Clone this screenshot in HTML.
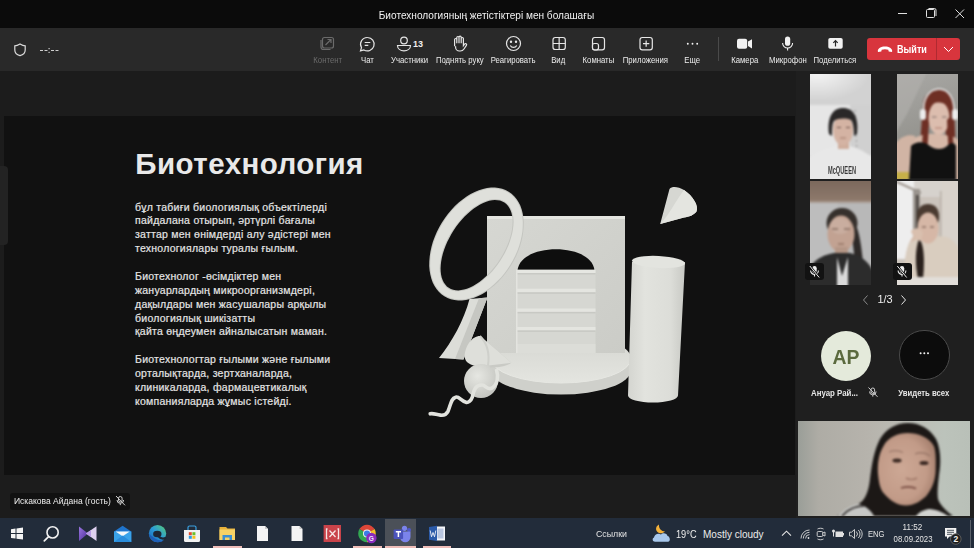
<!DOCTYPE html>
<html><head><meta charset="utf-8">
<style>
*{margin:0;padding:0;box-sizing:border-box}
html,body{width:974px;height:548px;overflow:hidden;background:#1f1f1f;font-family:"Liberation Sans",sans-serif;color:#fff}
.a{position:absolute}
#title{left:0;top:0;width:974px;height:28px;background:#0b0b0b}
#tb{left:0;top:28px;width:974px;height:43px;background:#292929}
#content{left:0;top:71px;width:796px;height:447px;background:#1c1c1c}
#slide{left:4px;top:116px;width:791px;height:359px;background:#111111}
#panel{left:797px;top:71px;width:177px;height:447px;background:#1f1f1f}
#taskbar{left:0;top:518px;width:974px;height:30px;background:#222c3a}
.lbl{font-size:9px;line-height:10px;color:#ececec;white-space:nowrap;text-align:center;width:80px;top:54.5px}
.lbl span{display:inline-block;transform:scaleX(0.86)}
svg{position:absolute;overflow:visible}
</style></head><body>
<div id="title" class="a"></div>
<div class="a" style="left:286.7px;top:7.5px;width:400px;text-align:center;font-size:11px;line-height:14px;color:#f2f2f2"><span style="display:inline-block;transform:scaleX(0.917)">Биотехнологияның жетістіктері мен болашағы</span></div>
<!-- window controls -->
<svg style="left:0;top:0" width="974" height="28">
 <line x1="898" y1="13.5" x2="907" y2="13.5" stroke="#e0e0e0" stroke-width="1"/>
 <rect x="926.5" y="9.5" width="8" height="8" rx="1" fill="none" stroke="#e0e0e0" stroke-width="1"/>
 <path d="M928.5 8.5 h6 a1.5 1.5 0 0 1 1.5 1.5 v6" fill="none" stroke="#e0e0e0" stroke-width="1"/>
 <path d="M955.5 9.5 L964 18 M964 9.5 L955.5 18" stroke="#e0e0e0" stroke-width="1"/>
</svg>
<div id="tb" class="a"></div>
<!-- shield + timer -->
<svg style="left:0;top:0" width="974" height="71">
 <path d="M20 44 C17.5 45.5 16 45.8 14.8 45.8 V50 C14.8 53 17 54.8 20 55.6 C23 54.8 25.2 53 25.2 50 V45.8 C24 45.8 22.5 45.5 20 44 Z" fill="none" stroke="#dcdcdc" stroke-width="1.2"/>
 <path d="M40 50.5 h3 M44.5 50.5 h3 M51 50.5 h3 M55.5 50.5 h3" stroke="#cfcfcf" stroke-width="1"/>
 <rect x="48.5" y="48" width="1.2" height="1.2" fill="#cfcfcf"/><rect x="48.5" y="51.8" width="1.2" height="1.2" fill="#cfcfcf"/>
</svg>
<!-- toolbar icons -->
<svg style="left:0;top:0" width="974" height="71" fill="none" stroke="#e6e6e6" stroke-width="1.2">
 <!-- content (disabled) -->
 <g stroke="#6b6b6b">
  <rect x="322.5" y="37.5" width="11" height="10.5" rx="2"/>
  <path d="M321 40 v7 a2.5 2.5 0 0 0 2.5 2.5 h7"/>
  <path d="M325.5 45 L331 39.5 M327.5 39.5 h3.5 v3.5"/>
 </g>
 <!-- chat -->
 <path d="M367.5 37.5 a6.7 6.7 0 1 1 -3.6 12.4 l-3.4 1 l1 -3.3 a6.7 6.7 0 0 1 6 -10.1 z"/>
 <path d="M364.7 42.5 h5.6 M364.7 45.3 h3.6"/>
 <!-- participants -->
 <circle cx="404" cy="40.5" r="3.3"/>
 <path d="M397.5 45.5 h13 c0 3.2 -2.9 5.3 -6.5 5.3 s-6.5 -2.1 -6.5 -5.3 z"/>
 <!-- raise hand -->
 <path d="M454.6 46.2 V39.6 a1.1 1.1 0 0 1 2.2 0 V43.2 M456.8 40 V37.6 a1.1 1.1 0 0 1 2.2 0 V43.2 M459 39 V37.2 a1.1 1.1 0 0 1 2.2 0 V43.2 M461.2 40 V38.6 a1.1 1.1 0 0 1 2.2 0 V45.6 l1.1 -1.5 a1.15 1.15 0 0 1 1.9 1.3 l-2.4 3.6 a4.4 4.4 0 0 1 -3.7 2 h-0.9 a3.8 3.8 0 0 1 -3.8 -3.8 V46.2"/>
 <!-- react -->
 <circle cx="513.5" cy="43.5" r="7"/>
 <circle cx="511" cy="41.8" r="0.6" fill="#e6e6e6"/><circle cx="516" cy="41.8" r="0.6" fill="#e6e6e6"/>
 <path d="M510.3 45.5 a3.6 3.6 0 0 0 6.4 0"/>
 <!-- view -->
 <rect x="553" y="37.5" width="12.3" height="12" rx="2.3"/>
 <path d="M559.15 37.5 v12 M553 43.5 h12.3"/>
 <!-- rooms -->
 <rect x="592.5" y="37.5" width="12" height="12.3" rx="2.3"/>
 <rect x="592.5" y="43.5" width="6" height="6.3" rx="2" fill="#292929"/>
 <!-- apps -->
 <rect x="640" y="37.5" width="12.3" height="12.3" rx="2.3"/>
 <path d="M646.15 40.5 v6.3 M643 43.65 h6.3"/>
 <!-- separator -->
 <line x1="718.5" y1="37" x2="718.5" y2="61" stroke="#4a4a4a" stroke-width="1"/>
</svg>
<svg style="left:0;top:0" width="974" height="71" fill="#f2f2f2">
 <circle cx="687.8" cy="43.8" r="0.95"/><circle cx="692.5" cy="43.8" r="0.95"/><circle cx="697.2" cy="43.8" r="0.95"/>
 <!-- camera -->
 <rect x="737" y="38.8" width="10.2" height="10" rx="2"/>
 <path d="M748 41.5 L752 39.2 V48.4 L748 46.1 Z"/>
 <!-- mic -->
 <rect x="785" y="36.6" width="5.2" height="9.2" rx="2.6"/>
 <path d="M782.6 43 a5 5 0 0 0 10 0" fill="none" stroke="#f2f2f2" stroke-width="1.1"/>
 <line x1="787.6" y1="48" x2="787.6" y2="50.5" stroke="#f2f2f2" stroke-width="1.1"/>
 <!-- share -->
 <rect x="828.3" y="38" width="14.4" height="10.8" rx="1.8"/>
 <path d="M835.5 46.5 V40.8 M833.3 42.8 L835.5 40.5 L837.7 42.8" stroke="#292929" stroke-width="1.2" fill="none"/>
</svg>
<div class="a" style="left:413px;top:38px;font-size:9px;font-weight:700;color:#f0f0f0;line-height:12px">13</div>
<div class="a lbl" style="left:287.5px;color:#6b6b6b"><span>Контент</span></div>
<div class="a lbl" style="left:327px"><span>Чат</span></div>
<div class="a lbl" style="left:369.5px"><span>Участники</span></div>
<div class="a lbl" style="left:419.5px"><span>Поднять руку</span></div>
<div class="a lbl" style="left:473.3px"><span>Реагировать</span></div>
<div class="a lbl" style="left:518.5px"><span>Вид</span></div>
<div class="a lbl" style="left:558.8px"><span>Комнаты</span></div>
<div class="a lbl" style="left:605.8px"><span>Приложения</span></div>
<div class="a lbl" style="left:652.5px"><span>Еще</span></div>
<div class="a lbl" style="left:704.5px"><span>Камера</span></div>
<div class="a lbl" style="left:747.6px"><span>Микрофон</span></div>
<div class="a lbl" style="left:795.3px"><span>Поделиться</span></div>
<!-- leave button -->
<div class="a" style="left:867px;top:38px;width:93px;height:22px;background:#d8353d;border-radius:3px"></div>
<div class="a" style="left:936px;top:38px;width:1px;height:22px;background:#b02a31"></div>
<svg style="left:0;top:0" width="974" height="71">
 <path d="M877.8 51.2 c0 -2.8 3.2 -4.6 7.2 -4.6 s7.2 1.8 7.2 4.6 l-0.3 0.9 l-3.2 -0.6 l-0.4 -1.8 c-2.2 -0.7 -4.4 -0.7 -6.6 0 l-0.4 1.8 l-3.2 0.6 z" fill="#fff"/>
 <path d="M944 47 L948.5 51.5 L953 47" fill="none" stroke="#fff" stroke-width="1"/>
</svg>
<div class="a" style="left:897px;top:43px;font-size:11px;font-weight:700;line-height:12px;color:#fff"><span style="display:inline-block;transform:scaleX(0.825);transform-origin:left">Выйти</span></div>

<div id="content" class="a"></div>
<div id="slide" class="a"></div>
<div class="a" style="left:0;top:166px;width:8px;height:79px;background:#232323;border-radius:0 4px 4px 0"></div>

<div class="a" style="left:135.3px;top:146.5px;font-size:29.5px;font-weight:700;letter-spacing:0.45px;line-height:34px;color:#e9e9e9;white-space:nowrap">Биотехнология</div>
<div class="a" id="body" style="left:135px;top:200.5px;font-size:10.5px;letter-spacing:0.25px;line-height:13.88px;color:#e4e4e4;white-space:nowrap;-webkit-text-stroke:0.2px #e4e4e4">
бұл табиғи биологиялық объектілерді<br>пайдалана отырып, әртүрлі бағалы<br>заттар мен өнімдерді алу әдістері мен<br>технологиялары туралы ғылым.<br><br>Биотехнолог -өсімдіктер мен<br>жануарлардың микроорганизмдері,<br>дақылдары мен жасушалары арқылы<br>биологиялық шикізатты<br>қайта өңдеумен айналысатын маман.<br><br>Биотехнологтар ғылыми және ғылыми<br>орталықтарда, зертханаларда,<br>клиникаларда, фармацевтикалық<br>компанияларда жұмыс істейді.</div>
<svg style="left:0;top:0" width="974" height="548">
 <defs>
  <linearGradient id="cyl" x1="0" x2="1" y1="0" y2="0">
   <stop offset="0" stop-color="#d4d5d0"/><stop offset="0.3" stop-color="#e2e3de"/><stop offset="0.75" stop-color="#dcddd8"/><stop offset="1" stop-color="#c8c9c4"/>
  </linearGradient>
  <linearGradient id="wall" x1="0" x2="1" y1="0" y2="1">
   <stop offset="0" stop-color="#d6d7d2"/><stop offset="1" stop-color="#cbccc7"/>
  </linearGradient>
  <linearGradient id="disc" x1="0" x2="0" y1="0" y2="1">
   <stop offset="0" stop-color="#d4d5d0"/><stop offset="1" stop-color="#e4e5e0"/>
  </linearGradient>
  <radialGradient id="sph" cx="0.4" cy="0.35" r="0.7">
   <stop offset="0" stop-color="#e6e7e2"/><stop offset="1" stop-color="#c2c3be"/>
  </radialGradient>
 </defs>
 <!-- disc -->
 <path d="M491 358.5 v11.5 a70 24.5 0 0 0 140 0 v-11.5 z" fill="#cfd0cb"/>
 <ellipse cx="561" cy="358.5" rx="70" ry="24.5" fill="url(#disc)"/>
 <path d="M491 358.5 a70 24.5 0 0 0 140 0" fill="none" stroke="#e6e7e2" stroke-width="1"/>
 <!-- wall -->
 <path d="M487 218 L625 218 L625 353 L487 353 Z" fill="url(#wall)"/>
 <rect x="487" y="216" width="138" height="3" fill="#e4e5e0"/>
 <!-- arch inner dark -->
 <path d="M517.5 270.5 C519 256 538 249.3 556 249.3 C574 249.3 593 256 594.5 270.5 Z" fill="#0e0e0e"/>
 <!-- stairs -->
 <rect x="516" y="270" width="79.5" height="83" fill="#d6d7d2"/>
 <rect x="516" y="269.6" width="79.5" height="3.4" fill="#e6e7e2"/>
 <rect x="516" y="288.7" width="79.5" height="3.6" fill="#e4e5e0"/>
 <rect x="516" y="308.5" width="79.5" height="3.4" fill="#e4e5e0"/>
 <rect x="516" y="327" width="79.5" height="3.4" fill="#e4e5e0"/>
 <rect x="516" y="273" width="79.5" height="1.5" fill="#c8c9c4"/>
 <rect x="516" y="292.3" width="79.5" height="1.5" fill="#c8c9c4"/>
 <rect x="516" y="311.9" width="79.5" height="1.5" fill="#c8c9c4"/>
 <rect x="516" y="330.4" width="79.5" height="1.5" fill="#c8c9c4"/>
 <rect x="516" y="344" width="79.5" height="9" fill="#dcddd8"/>
 <rect x="516" y="270" width="1.5" height="83" fill="#e3e4df"/>
 <!-- cylinder -->
 <path d="M632 262 L628 395.5 A25 7 0 0 0 678 395.5 L685 262 Z" fill="url(#cyl)"/>
 <ellipse cx="658.5" cy="262" rx="26.5" ry="6" transform="rotate(3 658.5 262)" fill="#e3e4df"/>
 <!-- cone top right -->
 <path d="M660.2 224 L669.5 189 C672 186 678 186.5 684 190 C693 196 699 206 696.5 211.5 C694 215 689 217 684 217.5 Z" fill="#d6d7d2"/>
 <path d="M684 190 C693 196 699 206 696.5 211.5 C694 215 689 217 684 217.5 L660.2 224 C670 214 676 200 684 190 Z" fill="#e4e5e0"/>
 <!-- ring -->
 <path d="M508.7 191.7 L511.6 193.8 L514.2 196.2 L516.5 199.0 L518.6 202.2 L520.3 205.6 L521.7 209.4 L522.7 213.4 L523.4 217.6 L523.8 222.1 L523.7 226.7 L523.3 231.5 L522.6 236.3 L521.5 241.2 L520.1 246.2 L518.3 251.1 L516.2 255.9 L513.8 260.7 L511.2 265.3 L508.2 269.8 L505.1 274.1 L501.7 278.1 L498.1 281.9 L494.3 285.4 L490.4 288.6 L486.4 291.5 L482.4 294.0 L478.3 296.1 L474.1 297.8 L470.0 299.1 L466.0 300.0 L462.0 300.4 L458.1 300.4 L454.4 300.0 L450.8 299.2 L447.5 298.0 L444.3 296.3 L441.4 294.2 L438.8 291.8 L436.5 289.0 L434.4 285.8 L432.7 282.4 L431.3 278.6 L430.3 274.6 L429.6 270.4 L429.2 265.9 L429.3 261.3 L429.7 256.5 L430.4 251.7 L431.5 246.8 L432.9 241.8 L434.7 236.9 L436.8 232.1 L439.2 227.3 L441.8 222.7 L444.8 218.2 L447.9 213.9 L451.3 209.9 L454.9 206.1 L458.7 202.6 L462.6 199.4 L466.6 196.5 L470.6 194.0 L474.7 191.9 L478.9 190.2 L483.0 188.9 L487.0 188.0 L491.0 187.6 L494.9 187.6 L498.6 188.0 L502.2 188.8 L505.5 190.0 Z M504.4 202.6 L506.3 204.0 L507.9 205.8 L509.4 207.9 L510.5 210.2 L511.5 212.9 L512.1 215.7 L512.5 218.8 L512.6 222.1 L512.4 225.6 L512.0 229.2 L511.3 233.0 L510.3 236.8 L509.1 240.7 L507.6 244.6 L505.9 248.6 L503.9 252.5 L501.8 256.3 L499.5 260.1 L497.0 263.8 L494.3 267.3 L491.5 270.6 L488.6 273.8 L485.6 276.7 L482.5 279.4 L479.4 281.9 L476.3 284.0 L473.1 285.9 L470.0 287.4 L466.9 288.7 L464.0 289.6 L461.1 290.1 L458.3 290.4 L455.7 290.2 L453.2 289.8 L450.9 289.0 L448.8 287.8 L446.9 286.4 L445.3 284.6 L443.8 282.5 L442.7 280.2 L441.7 277.5 L441.1 274.7 L440.7 271.6 L440.6 268.3 L440.8 264.8 L441.2 261.2 L441.9 257.4 L442.9 253.6 L444.1 249.7 L445.6 245.8 L447.3 241.8 L449.3 237.9 L451.4 234.1 L453.7 230.3 L456.2 226.6 L458.9 223.1 L461.7 219.8 L464.6 216.6 L467.6 213.7 L470.7 211.0 L473.8 208.5 L476.9 206.4 L480.1 204.5 L483.2 203.0 L486.3 201.7 L489.2 200.8 L492.1 200.3 L494.9 200.0 L497.5 200.2 L500.0 200.6 L502.3 201.4 Z" fill="#c4c5c0" fill-rule="evenodd"/>
 <path d="M508.1 192.6 L511.0 194.6 L513.5 196.9 L515.8 199.7 L517.8 202.8 L519.5 206.2 L520.8 209.8 L521.8 213.8 L522.5 218.0 L522.8 222.3 L522.7 226.9 L522.4 231.5 L521.6 236.3 L520.5 241.1 L519.1 246.0 L517.4 250.8 L515.3 255.6 L512.9 260.2 L510.3 264.8 L507.4 269.2 L504.3 273.4 L501.0 277.4 L497.4 281.1 L493.8 284.6 L490.0 287.7 L486.0 290.5 L482.1 293.0 L478.0 295.1 L474.0 296.8 L470.0 298.1 L466.0 299.0 L462.1 299.4 L458.3 299.5 L454.7 299.1 L451.2 298.3 L447.9 297.1 L444.9 295.4 L442.0 293.4 L439.5 291.1 L437.2 288.3 L435.2 285.2 L433.5 281.8 L432.2 278.2 L431.2 274.2 L430.5 270.0 L430.2 265.7 L430.3 261.1 L430.6 256.5 L431.4 251.7 L432.5 246.9 L433.9 242.0 L435.6 237.2 L437.7 232.4 L440.1 227.8 L442.7 223.2 L445.6 218.8 L448.7 214.6 L452.0 210.6 L455.6 206.9 L459.2 203.4 L463.0 200.3 L467.0 197.5 L470.9 195.0 L475.0 192.9 L479.0 191.2 L483.0 189.9 L487.0 189.0 L490.9 188.6 L494.7 188.5 L498.3 188.9 L501.8 189.7 L505.1 190.9 Z M504.9 201.7 L506.9 203.2 L508.6 205.1 L510.1 207.2 L511.3 209.6 L512.3 212.3 L513.0 215.3 L513.4 218.4 L513.6 221.8 L513.4 225.4 L513.0 229.1 L512.3 232.9 L511.3 236.8 L510.1 240.8 L508.6 244.9 L506.8 248.9 L504.9 252.9 L502.7 256.8 L500.3 260.7 L497.7 264.4 L495.0 268.0 L492.2 271.4 L489.2 274.6 L486.1 277.6 L483.0 280.3 L479.8 282.8 L476.5 285.0 L473.3 286.9 L470.1 288.4 L467.0 289.7 L463.9 290.6 L460.9 291.1 L458.1 291.3 L455.4 291.2 L452.8 290.7 L450.4 289.9 L448.3 288.7 L446.3 287.2 L444.6 285.3 L443.1 283.2 L441.9 280.8 L440.9 278.1 L440.2 275.1 L439.8 272.0 L439.6 268.6 L439.8 265.0 L440.2 261.3 L440.9 257.5 L441.9 253.6 L443.1 249.6 L444.6 245.5 L446.4 241.5 L448.3 237.5 L450.5 233.6 L452.9 229.7 L455.5 226.0 L458.2 222.4 L461.0 219.0 L464.0 215.8 L467.1 212.8 L470.2 210.1 L473.4 207.6 L476.7 205.4 L479.9 203.5 L483.1 202.0 L486.2 200.7 L489.3 199.8 L492.3 199.3 L495.1 199.1 L497.8 199.2 L500.4 199.7 L502.8 200.5 Z" fill="#dfe0db" fill-rule="evenodd"/>
 <!-- slab -->
 <path d="M469.5 299 L487.5 297.5 L463.5 359.5 L439 358 C452 342 464 320 469.5 299 Z" fill="#dcddd8"/>
 <path d="M479 298.3 L487.5 297.5 L463.5 359.5 L455 359 Z" fill="#c6c7c2"/>
 <!-- small cone -->
 <path d="M480 336 L511.4 362.8 C506 367 492 369 480 366.5 Z" fill="#c9cac5"/>
 <path d="M480 336 C472 336 465 346 464.7 356 C464.5 362 470 366 480 366.5 L511.4 362.8 Z" fill="#dedfda"/>
 <path d="M480 336 C486 342 490 352 488 366" fill="none" stroke="#cfd0cb" stroke-width="2"/>
 <!-- sphere -->
 <circle cx="481" cy="381" r="17" fill="url(#sph)"/>
 <!-- squiggle -->
 <path d="M496.6 370.4 C498.5 376 498 385 491.5 388.3 C487 390 485 385 482.5 385 C476 384.5 474 389 472.3 397.2 C471 401 468 403 466 402.3 C461 401 459 396 455.7 397.2 C451 398.5 451 404 448 411.3 C446 415 443 415.5 440.4 415.1 C436 414.5 433 413 430.2 413.8" fill="none" stroke="#e2e3de" stroke-width="3.6" stroke-linecap="round"/>
</svg>


<div id="panel" class="a"></div>
<!-- video tiles -->
<div class="a" style="left:810px;top:74px;width:61px;height:105px;overflow:hidden;background:#dedede">
 <svg width="61" height="105" style="left:0;top:0;filter:blur(1px)">
  <defs><radialGradient id="t1g" cx="0.15" cy="0.05" r="0.8"><stop offset="0" stop-color="#f4f4f4"/><stop offset="1" stop-color="#d2d2d2"/></radialGradient></defs>
  <rect x="-2" y="-2" width="65" height="34" fill="url(#t1g)"/>
  <rect x="-2" y="31" width="44" height="50" fill="#e6e6e6"/>
  <rect x="40" y="31" width="23" height="50" fill="#d0d0d0"/>
  <path d="M45 36 L47 80" stroke="#9a9a9a" stroke-width="1" stroke-dasharray="2 3"/>
  <path d="M-2 84 C6 78 16 74 26 72 L40 72 C48 74 56 78 63 84 V107 H-2 Z" fill="#e8e8e8"/>
  <rect x="28" y="66" width="11" height="9" fill="#cfae9d"/>
  <ellipse cx="33" cy="56" rx="10" ry="15.5" fill="#d4b3a3"/>
  <path d="M19 60 C17 44 22 34 33 34 C44 34 49 44 47 60 L44 62 C44 54 43 48 41 46 C36 44 28 44 24 47 C22 50 22 56 22 62 Z" fill="#2a2828"/>
  <path d="M27 53.5 h4 M36 53.5 h4" stroke="#6a5048" stroke-width="1"/>
  <path d="M30 64 h6" stroke="#a07868" stroke-width="1"/>
 </svg>
 <svg width="61" height="105" style="left:0;top:0"><text x="32" y="100" font-size="10.5" font-weight="700" text-anchor="middle" fill="#1a1a1a" font-family="Liberation Sans" textLength="28" lengthAdjust="spacingAndGlyphs" opacity="0.85">McQUEEN</text></svg>
</div>
<div class="a" style="left:897px;top:74px;width:61px;height:105px;overflow:hidden;background:linear-gradient(160deg,#a9a8a5 0%,#95948f 55%,#858480 100%)">
 <svg width="61" height="105" style="left:0;top:0;filter:blur(1px)">
  <path d="M-2 0 L30 -2 L10 40 L-2 60 Z" fill="#b2b1ad" opacity="0.6"/>
  <path d="M26 30 C27 20 34 16 42 16 C51 16 57 22 57 32 L59 84 L50 84 L48 44 L32 44 L28 84 L22 84 Z" fill="#6e2f24"/>
  <path d="M-2 70 C4 62 12 60 18 62 L20 106 H-2 Z" fill="#d1b4a4"/>
  <path d="M52 62 C58 62 63 66 63 70 V106 H52 Z" fill="#cdb0a0"/>
  <path d="M18 64 C26 58 52 58 58 66 L58 84 L18 84 Z" fill="#d6b8a8"/>
  <ellipse cx="42" cy="44" rx="10.5" ry="16.5" fill="#dcbdae"/>
  <path d="M30 36 C32 26 50 26 54 36 L54 30 C50 22 34 22 30 30 Z" fill="#6e2f24"/>
  <path d="M27 44 L24 84 L30 84 L32 48 Z M54 42 L58 86 L52 86 L50 46 Z" fill="#6e2f24"/>
  <path d="M35 43 h4.5 M45 43 h4.5" stroke="#7a6a66" stroke-width="1"/>
  <path d="M38 54 h7" stroke="#b07a6a" stroke-width="1"/>
  <path d="M14 72 C20 66 28 68 33 72 C38 76 46 76 50 72 C54 68 57 68 59 72 V106 H12 Z" fill="#111"/>
  <path d="M27 40 C25 24 33 15 42 15 C51 15 58 24 57 40" fill="none" stroke="#e6e6e6" stroke-width="1.6"/>
  <rect x="23" y="35" width="6" height="11" rx="3" fill="#ececec"/>
  <rect x="55" y="35" width="6" height="11" rx="3" fill="#ececec"/>
  <rect x="-2" y="98" width="14" height="8" fill="#c7b048"/>
 </svg>
</div>
<div class="a" style="left:810px;top:181px;width:61px;height:104px;overflow:hidden;background:#b8b8b8">
 <svg width="61" height="104" style="left:0;top:0;filter:blur(1px)">
  <defs><linearGradient id="t3b" x1="0" x2="0" y1="0" y2="1"><stop offset="0" stop-color="#7a675b"/><stop offset="1" stop-color="#8e7a6c"/></linearGradient></defs>
  <rect x="-2" y="-2" width="65" height="22" fill="url(#t3b)"/>
  <rect x="-2" y="20" width="65" height="2" fill="#a89a90"/>
  <rect x="-2" y="22" width="30" height="84" fill="#bdbdbd"/>
  <path d="M44 40 C50 50 52 70 54 92 L46 92 C44 70 42 55 40 44 Z" fill="#2e2a28"/>
  <ellipse cx="32" cy="42" rx="15.5" ry="15" fill="#36302c"/>
  <ellipse cx="31" cy="53" rx="13.5" ry="18.5" fill="#c2a292"/>
  <ellipse cx="30" cy="45" rx="10" ry="8" fill="#cbb0a2" opacity="0.8"/>
  <path d="M22 48 h6 M34 48 h6" stroke="#6a5045" stroke-width="1.2"/>
  <path d="M28 63 h6" stroke="#8a6a5a" stroke-width="1.2"/>
  <rect x="25" y="66" width="13" height="12" fill="#b49686"/>
  <path d="M-2 90 C2 80 12 74 24 72 L40 72 C50 74 58 80 63 90 V106 H-2 Z" fill="#2c2c2c"/>
  <path d="M27 76 L32 95 L38 76 L38 106 L27 106 Z" fill="#dadada"/>
 </svg>
</div>
<div class="a" style="left:897px;top:181px;width:61px;height:104px;overflow:hidden;background:#cbc4bc">
 <svg width="61" height="104" style="left:0;top:0;filter:blur(1px)">
  <rect x="-2" y="-2" width="65" height="18" fill="#d6d2cd"/>
  <rect x="-2" y="-2" width="19" height="80" fill="#eeeeee"/>
  <path d="M-2 0 L24 12" stroke="#a09890" stroke-width="2"/>
  <rect x="16" y="8" width="7" height="62" fill="#9a948e"/>
  <rect x="19" y="14" width="2.5" height="50" fill="#4a4440"/>
  <rect x="44" y="-2" width="19" height="108" fill="#d8d2cb"/>
  <rect x="43" y="10" width="1.5" height="80" fill="#b8b0a8"/>
  <path d="M8 80 C10 62 16 52 24 50 L28 56 C22 62 18 72 16 84 Z" fill="#d6bcab"/>
  <path d="M12 62 C22 56 40 54 50 56 C58 60 62 66 63 72 V106 H6 C6 90 8 74 12 62 Z" fill="#d9cdbf"/>
  <path d="M20 38 C19 27 25 23 31 23 C38 23 43 28 42 38 L40 46 L22 46 Z" fill="#4a3a30"/>
  <ellipse cx="31" cy="47" rx="10.5" ry="15.5" fill="#d6b7a6"/>
  <path d="M25 46 h4 M33 46 h4" stroke="#6a5045" stroke-width="1"/>
  <path d="M22 58 C27 62 28 80 26 98 L21 98 C18 84 18 68 22 58 Z" fill="#2a211d"/>
  <path d="M14 50 C18 46 24 46 26 52 L24 60 C20 60 16 56 14 50 Z" fill="#d9bfae"/>
  <rect x="-2" y="96" width="65" height="10" fill="#e2ded9"/>
 </svg>
</div>
<!-- mic badges -->
<div class="a" style="left:805px;top:262.5px;width:19px;height:17.5px;background:#121212;border-radius:3px"></div>
<div class="a" style="left:892.5px;top:262.5px;width:19.5px;height:17.5px;background:#121212;border-radius:3px"></div>
<svg style="left:0;top:0" width="974" height="548" fill="none" stroke="#e6e6e6" stroke-width="1">
 <g>
  <rect x="812.3" y="266" width="4.4" height="7" rx="2.2" fill="#eeeeee" stroke="none"/>
  <path d="M810.6 270.5 a3.9 3.9 0 0 0 7.8 0 M814.5 274.5 v2" stroke="#eeeeee" stroke-width="1.1"/>
  <path d="M809.8 266 L819.2 277.5" stroke="#111" stroke-width="2.2"/>
  <path d="M809.8 266 L819.2 277.5" stroke="#eeeeee" stroke-width="1"/>
 </g>
 <g transform="translate(87.5 0)">
  <rect x="812.3" y="266" width="4.4" height="7" rx="2.2" fill="#eeeeee" stroke="none"/>
  <path d="M810.6 270.5 a3.9 3.9 0 0 0 7.8 0 M814.5 274.5 v2" stroke="#eeeeee" stroke-width="1.1"/>
  <path d="M809.8 266 L819.2 277.5" stroke="#111" stroke-width="2.2"/>
  <path d="M809.8 266 L819.2 277.5" stroke="#eeeeee" stroke-width="1"/>
 </g>
 <!-- pagination -->
 <path d="M867.5 295.5 L863.5 300 L867.5 304.5" stroke="#8a8a8a"/>
 <path d="M901.5 295.5 L905.5 300 L901.5 304.5" stroke="#e6e6e6"/>
</svg>
<div class="a" style="left:870px;top:293px;width:30px;text-align:center;font-size:11.5px;line-height:13px;color:#f0f0f0"><span style="display:inline-block;transform:scaleX(0.95)">1/3</span></div>
<!-- avatars -->
<div class="a" style="left:821px;top:331px;width:50px;height:50px;border-radius:50%;background:#e4eadb"></div>
<div class="a" style="left:821px;top:346.5px;width:50px;text-align:center;font-size:20px;font-weight:700;line-height:20px;color:#5b6a3e"><span style="display:inline-block;transform:scaleX(0.97)">AP</span></div>
<div class="a" style="left:899px;top:329.5px;width:50.5px;height:50.5px;border-radius:50%;background:#0c0c0c;border:1px solid #4a4a4a"></div>
<svg style="left:0;top:0" width="974" height="548" fill="#f2f2f2">
 <circle cx="920.6" cy="353.2" r="1"/><circle cx="924.3" cy="353.2" r="1"/><circle cx="928" cy="353.2" r="1"/>
</svg>
<div class="a" style="left:811px;top:388px;font-size:9px;font-weight:700;line-height:10px;color:#e6e6e6;white-space:nowrap"><span style="display:inline-block;transform:scaleX(0.874);transform-origin:left">Ануар Рай...</span></div>
<svg style="left:0;top:0" width="974" height="548" fill="none" stroke="#cfcfcf" stroke-width="1">
 <rect x="871" y="388" width="3.6" height="5.5" rx="1.8"/>
 <path d="M869.5 391.5 a3.3 3.3 0 0 0 6.6 0 M872.8 395 v1.6 M868.5 387.5 L877.5 396.8"/>
</svg>
<div class="a" style="left:874px;top:388px;width:100px;text-align:center;font-size:9px;font-weight:700;line-height:10px;color:#e6e6e6;white-space:nowrap"><span style="display:inline-block;transform:scaleX(0.856)">Увидеть всех</span></div>
<!-- teacher video -->
<div class="a" style="left:798px;top:421px;width:172px;height:95px;overflow:hidden;background:linear-gradient(90deg,#9a9e98 0%,#aeaca5 12%,#b6b3ac 40%,#bcbdb6 65%,#bcc3bb 85%,#b9c0b8 100%)">
 <svg width="172" height="95" style="left:0;top:0;filter:blur(1.1px)">
  <path d="M39 95 C48 90 56 86 62 82 C68 78 71 68 72 58 C74 42 76 30 82 18 C88 8 98 2 110 2 C122 2 132 8 138 18 C143 28 143 42 141 54 C140 64 139 72 140 78 C142 84 148 90 155 95 Z" fill="#1c1816"/>
  <defs><radialGradient id="tface" cx="0.42" cy="0.5" r="0.6"><stop offset="0" stop-color="#cda895"/><stop offset="0.7" stop-color="#c29b88"/><stop offset="1" stop-color="#a88270"/></radialGradient></defs>
  <path d="M109.7 12 C100 12 90 16 85.5 25 C80 34 79.5 45 80 53 C81 62 82 68 85.5 72 C92 80 100 84.5 108 84.5 C116 84.5 123 80 128.3 75 C134 68 137 60 137.6 51 C138 40 138 30 135.8 25 C131 16 120 12 109.7 12 Z" fill="url(#tface)"/>
  <path d="M91 31 C95 29.5 101 29.5 105 31.5 M117 33 C122 31 128 32 132 35" stroke="#8a6a5c" stroke-width="1.3" fill="none" opacity="0.7"/>
  <ellipse cx="99" cy="39.5" rx="4.5" ry="2" fill="#3a2822"/>
  <ellipse cx="126" cy="42" rx="4.5" ry="2" fill="#3a2822"/>
  <path d="M108 57 C111 59 116 59 119 57" stroke="#9a7263" stroke-width="1.6" fill="none" opacity="0.8"/>
  <path d="M103 67 C108 65.5 114 65.5 118 67.5" stroke="#7a4e44" stroke-width="1.8" fill="none"/>
  <path d="M40 95 C46 88 54 84 60 83 C66 84 72 88 76 95 Z" fill="#c6c7c5"/>
  <path d="M44 95 C50 88 58 85 66 85" stroke="#2a2624" stroke-width="1.5" fill="none"/>
  <path d="M118 95 C122 90 128 88 132 88 C140 89 146 92 150 95 Z" fill="#d2d3d0"/>
 </svg>
</div>
<div class="a" style="left:970px;top:421px;width:4px;height:97px;background:#1f1f1f"></div>
<!-- name tag -->
<div class="a" style="left:10px;top:493px;width:120px;height:17px;background:#111111;border-radius:3px"></div>
<div class="a" style="left:14px;top:496px;font-size:9px;line-height:11px;color:#ececec;white-space:nowrap"><span style="display:inline-block;transform:scaleX(0.945);transform-origin:left">Искакова Айдана (гость)</span></div>
<svg style="left:0;top:0" width="974" height="548" fill="none" stroke="#d0d0d0" stroke-width="1">
 <rect x="118.5" y="496.5" width="3.6" height="5.5" rx="1.8"/>
 <path d="M117 500 a3.3 3.3 0 0 0 6.6 0 M120.3 503.5 v1.6 M116 496 L125 505.3"/>
</svg>
<div id="taskbar" class="a"></div>
<div class="a" style="left:385px;top:519px;width:31px;height:29px;background:#4b5058"></div>
<div class="a" style="left:213px;top:546px;width:29px;height:2px;background:#efbdb8"></div>
<div class="a" style="left:353px;top:546px;width:29px;height:2px;background:#efbdb8"></div>
<div class="a" style="left:385px;top:546px;width:31px;height:2px;background:#efbdb8"></div>
<div class="a" style="left:423px;top:546px;width:28px;height:2px;background:#efbdb8"></div>
<svg style="left:0;top:0" width="974" height="548">
 <defs>
  <linearGradient id="vsL" x1="0" x2="1" y1="0" y2="1"><stop offset="0" stop-color="#9a76e0"/><stop offset="1" stop-color="#4a2a9a"/></linearGradient>
  <linearGradient id="edge" x1="0" x2="1" y1="1" y2="0"><stop offset="0" stop-color="#1a5fb0"/><stop offset="0.5" stop-color="#2a9ad8"/><stop offset="1" stop-color="#5ad070"/></linearGradient>
 </defs>
 <!-- windows -->
 <path d="M11 529.3 L15.5 528.6 V533 H11 Z M16.5 528.4 L23 527.6 V533 H16.5 Z M11 534 H15.5 V538.6 L11 538 Z M16.5 534 H23 V539.6 L16.5 538.8 Z" fill="#f4f4f4"/>
 <!-- search -->
 <circle cx="52.6" cy="532.4" r="5.6" fill="none" stroke="#f2f2f2" stroke-width="1.6"/>
 <path d="M48.6 536.6 L44.3 540.9" stroke="#f2f2f2" stroke-width="1.7" stroke-linecap="round"/>
 <!-- VS -->
 <path d="M79 526.5 L88 533.6 L79 541 Z" fill="url(#vsL)"/>
 <path d="M96.5 526.2 L86 533.6 L96.5 541.1 Z" fill="#ddd0ef"/>
 <path d="M86 533.6 L91 530 L91 537.2 Z" fill="#b79be6"/>
 <!-- mail -->
 <path d="M114 531.5 L122.6 525.7 L131.3 531.5 V542 H114 Z" fill="#1f74cc"/>
 <path d="M114 531.5 H131.3 V542 H114 Z" fill="#3aa3ea"/>
 <path d="M115.5 531.5 L122.6 536.2 L129.8 531.5 Z" fill="#f5f7fa"/>
 <path d="M114 542 L122.6 535.5 L131.3 542 Z" fill="#2a8ddc"/>
 <!-- edge -->
 <circle cx="157.5" cy="533.6" r="8.7" fill="url(#edge)"/>
 <ellipse cx="157.3" cy="534" rx="4.2" ry="3.2" fill="#1e2836"/>
 <path d="M158.5 536.2 C160.5 538.6 163.5 539.2 166.2 537.6" fill="none" stroke="#1e2836" stroke-width="2.2"/>
 <path d="M149.2 533.5 C149 538.5 153 542.3 158 542.3 C160.5 542.3 162.5 541.5 164 540.3 C161 540.8 157.5 540.2 155 538.5 C152.5 537 150.5 535.5 149.2 533.5 Z" fill="#1f5fb8"/>
 <!-- store -->
 <path d="M184 530 H200 V540.5 A1.5 1.5 0 0 1 198.5 542 H185.5 A1.5 1.5 0 0 1 184 540.5 Z" fill="#f2f2f2"/>
 <path d="M188 530 V527.5 A1.5 1.5 0 0 1 189.5 526 H194.5 A1.5 1.5 0 0 1 196 527.5 V530" fill="none" stroke="#3aa0e0" stroke-width="1.2"/>
 <rect x="188.8" y="532.2" width="3" height="3" fill="#e04a2a"/><rect x="192.4" y="532.2" width="3" height="3" fill="#6ac02a"/>
 <rect x="188.8" y="535.8" width="3" height="3" fill="#2a9ae0"/><rect x="192.4" y="535.8" width="3" height="3" fill="#f5c020"/>
 <!-- folder -->
 <path d="M219.5 527 H226 L227.5 528.5 H235 V540 H219.5 Z" fill="#e8b23a"/>
 <rect x="219.5" y="529.5" width="15.5" height="10.5" fill="#f6d266"/>
 <path d="M222.5 540 V535 H232 V540 H229.5 V537.5 H225 V540 Z" fill="#3a8fd4"/>
 <!-- docs -->
 <path d="M257 526 H265 L268 529 V541 H257 Z" fill="#f4f4f4"/>
 <path d="M265 526 V529 H268" fill="#c8c8c8"/>
 <path d="M291.5 526 H299.5 L302.5 529 V541 H291.5 Z" fill="#f4f4f4"/>
 <path d="M299.5 526 V529 H302.5" fill="#c8c8c8"/>
 <!-- red app -->
 <rect x="323.6" y="525" width="17.4" height="17" fill="#c9434a"/>
 <path d="M327.5 529 H326.5 V538.5 H327.5 M337.5 529 H338.5 V538.5 H337.5 M329.5 530.5 L335.5 537 M335.5 530.5 L329.5 537" fill="none" stroke="#f6e6e6" stroke-width="1.3"/>
 <!-- chrome -->
 <path d="M367 533.5 L359.4 529.1 A8.8 8.8 0 0 1 374.6 529.1 Z" fill="#dd4638"/>
 <path d="M367 533.5 L374.6 529.1 A8.8 8.8 0 0 1 367 542.3 Z" fill="#f6c02a"/>
 <path d="M367 533.5 L367 542.3 A8.8 8.8 0 0 1 359.4 529.1 Z" fill="#32a752"/>
 <circle cx="367" cy="533.5" r="4" fill="#f4f4f4"/><circle cx="367" cy="533.5" r="3.1" fill="#3b7de8"/>
 <circle cx="371.4" cy="538" r="5.2" fill="#8a2bbd"/>
 <text x="371.4" y="540.6" font-size="6.5" font-weight="700" fill="#f0e8f8" text-anchor="middle" font-family="Liberation Sans">G</text>
 <!-- teams -->
 <circle cx="404.5" cy="528.3" r="2.6" fill="#7b83eb"/>
 <circle cx="409" cy="530" r="2" fill="#5059c9"/>
 <path d="M400 531.5 H410.5 V537 A5 5 0 0 1 400 537 Z" fill="#7b83eb"/>
 <rect x="393.6" y="529.5" width="9.5" height="9.5" rx="1" fill="#4b53bc"/>
 <path d="M395.8 531.8 H401 M398.4 531.8 V537" stroke="#fff" stroke-width="1.5"/>
 <!-- word -->
 <rect x="436" y="526.5" width="9" height="14" fill="#f4f6fa"/>
 <rect x="437.5" y="528.5" width="6" height="10" fill="#b9c6e0"/>
 <path d="M429 527 L437 525.8 V541 L429 539.8 Z" fill="#2b5aa8"/>
 <path d="M430.2 530.5 L431.5 536.8 L433 532.5 L434.5 536.8 L435.8 530.5" fill="none" stroke="#f0f2f8" stroke-width="0.9"/>
 <!-- weather icon -->
 <path d="M659 524.5 C656 526 655 529.5 657.5 532 C659.5 534 663 533.5 665 531.5 C661.5 531.5 658.5 528.5 659 524.5 Z" fill="#f5b23a"/>
 <path d="M655 541.7 C652.5 541.7 651.8 538.5 654 537.5 C654.5 534 658.5 532.8 661 534.5 C662.5 532.5 667 533 667.5 536 C670 536.2 671 541.7 668 541.7 Z" fill="#a9c8ec"/>
 <!-- tray -->
 <path d="M782 535.6 L786.5 531.2 L791 535.6" fill="none" stroke="#e6e6e6" stroke-width="1.1"/>
 <g fill="none" stroke="#dadada" stroke-width="0.9">
  <path d="M801 538.5 A8.5 8.5 0 0 1 809.5 530"/>
  <path d="M803.3 538.5 A6.2 6.2 0 0 1 809.5 532.3"/>
  <path d="M805.6 538.5 A3.9 3.9 0 0 1 809.5 534.6"/>
  <rect x="817.2" y="531.5" width="5.5" height="5" rx="1"/>
  <path d="M822.7 533 L825 532 V536 L822.7 535 M817.5 529 C819 528 822 528 823.5 529 M817.5 539 C819 540 822 540 823.5 539"/>
  <path d="M849.5 532.2 H851.5 L854.5 529.5 V538.5 L851.5 535.8 H849.5 Z"/>
  <path d="M856.3 531.5 A3.5 3.5 0 0 1 856.3 536.5 M858.3 530 A5.5 5.5 0 0 1 858.3 538 M860.3 529.2 A7 7 0 0 1 860.3 538.8"/>
 </g>
 <circle cx="808.5" cy="538" r="0.9" fill="#e6e6e6"/>
 <rect x="835.5" y="531.5" width="7.5" height="5.5" fill="#e0e0e0"/>
 <rect x="843" y="533" width="1" height="2.5" fill="#e0e0e0"/>
 <circle cx="833.5" cy="531" r="1.5" fill="#e0e0e0"/>
 <rect x="833" y="531.5" width="1" height="5" fill="#e0e0e0"/>
 <!-- notification -->
 <path d="M945 528 H956.3 V536.5 H949.5 L947 539 V536.5 H945 Z" fill="#f2f2f2"/>
 <path d="M947 530.3 H954 M947 532.3 H954 M947 534.3 H952" stroke="#222c3a" stroke-width="0.8"/>
 <circle cx="955.8" cy="539" r="5.3" fill="#1f1f1f" stroke="#6a6a6a" stroke-width="0.8"/>
 <text x="955.8" y="542.2" font-size="8.5" font-weight="700" fill="#f2f2f2" text-anchor="middle" font-family="Liberation Sans">2</text>
 <rect x="970" y="520" width="1" height="28" fill="#59606a"/>
</svg>
<div class="a" style="left:596px;top:527.6px;font-size:9.8px;line-height:11px;color:#e2e2e2;white-space:nowrap"><span style="display:inline-block;transform:scaleX(0.9);transform-origin:left">Ссылки</span></div>
<div class="a" style="left:676px;top:528.5px;font-size:10px;line-height:11px;color:#ececec;white-space:nowrap"><span style="display:inline-block;transform:scaleX(0.92);transform-origin:left">19°C</span></div>
<div class="a" style="left:703px;top:528.5px;font-size:10px;line-height:11px;color:#ececec;white-space:nowrap"><span style="display:inline-block;transform:scaleX(1.0);transform-origin:left">Mostly cloudy</span></div>
<div class="a" style="left:867.5px;top:527.6px;font-size:9.6px;line-height:11px;color:#e6e6e6;white-space:nowrap"><span style="display:inline-block;transform:scaleX(0.79);transform-origin:left">ENG</span></div>
<div class="a" style="left:880px;top:522.5px;width:65px;text-align:center;font-size:8.5px;line-height:9px;color:#e6e6e6;white-space:nowrap"><span style="display:inline-block;transform:scaleX(0.95)">11:52</span></div>
<div class="a" style="left:880.3px;top:532.9px;width:65px;text-align:center;font-size:9.6px;line-height:11px;color:#e6e6e6;white-space:nowrap"><span style="display:inline-block;transform:scaleX(0.81)">08.09.2023</span></div>


</body></html>
